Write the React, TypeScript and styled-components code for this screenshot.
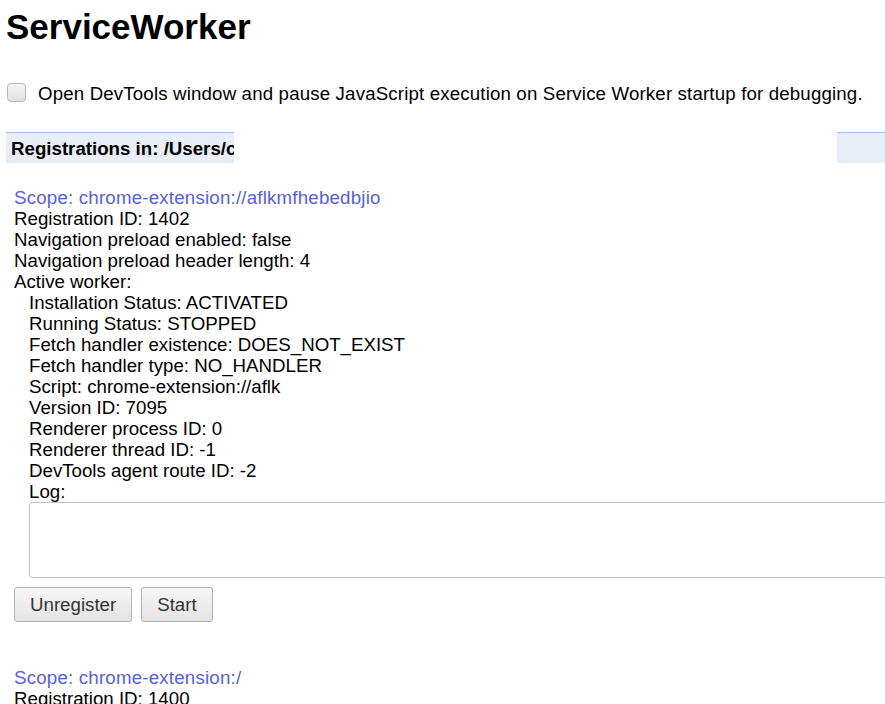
import React from "react";
import styled, { createGlobalStyle } from "styled-components";

const Global = createGlobalStyle`
  html, body { margin: 0; padding: 0; background: #fff; overflow: hidden; }
  body { font-family: "Liberation Sans", Arial, sans-serif; color: #000; }
`;

const Page = styled.div`
  padding: 7px 0 0 6px;
  width: 879px;
  font-size: 18.7px;
  line-height: 21px;
`;

const Title = styled.h1`
  margin: 0;
  font-size: 35px;
  line-height: 40px;
  font-weight: 700;
`;

const CheckRow = styled.label`
  display: flex;
  align-items: flex-start;
  gap: 12px;
  margin: 36px 0 0 1px;
`;

const Check = styled.input`
  appearance: none;
  margin: 0;
  width: 19px;
  height: 19px;
  box-sizing: border-box;
  border: 1px solid #b9b9b9;
  border-radius: 4px;
  background: linear-gradient(#f4f4f4, #e2e2e2);
  flex: none;
`;

const CheckText = styled.span`
  letter-spacing: 0.15px;
`;

const HeaderRow = styled.div`
  display: flex;
  justify-content: space-between;
  margin-top: 28px;
`;

const HeaderCell = styled.div<{ $w: number }>`
  width: ${(p) => p.$w}px;
  box-sizing: border-box;
  height: 31px;
  border-top: 1px solid #9ec3ef;
  background: #e9edf8;
  padding: 5px 0 0 5px;
  font-weight: 700;
  white-space: nowrap;
  overflow: hidden;
`;

const Registration = styled.section<{ $top: number }>`
  margin: ${(p) => p.$top}px 0 0 8px;
`;

const ScopeLine = styled.div`
  color: #5561de;
  white-space: nowrap;
  letter-spacing: 0.2px;
`;

const Line = styled.div<{ $indent?: boolean }>`
  padding-left: ${(p) => (p.$indent ? 15 : 0)}px;
  white-space: nowrap;
`;

const LogBox = styled.textarea`
  display: block;
  margin: 0 0 0 15px;
  width: 880px;
  height: 76px;
  box-sizing: border-box;
  border: 1px solid #c2c2c2;
  border-radius: 3px;
  resize: none;
  background: #fff;
`;

const Buttons = styled.div`
  display: flex;
  gap: 9px;
  margin-top: 9px;
`;

const Button = styled.button`
  height: 35px;
  box-sizing: border-box;
  padding: 0 15px;
  border: 1px solid #b3b3b3;
  border-radius: 3px;
  background: linear-gradient(#f7f7f7, #e3e3e3);
  font-family: "Liberation Sans", Arial, sans-serif;
  font-size: 18.7px;
  color: #333;
`;

const workerLines = [
  "Installation Status: ACTIVATED",
  "Running Status: STOPPED",
  "Fetch handler existence: DOES_NOT_EXIST",
  "Fetch handler type: NO_HANDLER",
  "Script: chrome-extension://aflk",
  "Version ID: 7095",
  "Renderer process ID: 0",
  "Renderer thread ID: -1",
  "DevTools agent route ID: -2",
  "Log:",
];

export default function App() {
  return (
    <>
      <Global />
      <Page>
        <Title>ServiceWorker</Title>
        <CheckRow>
          <Check type="checkbox" />
          <CheckText>
            Open DevTools window and pause JavaScript execution on Service Worker startup for debugging.
          </CheckText>
        </CheckRow>
        <HeaderRow>
          <HeaderCell $w={228}>Registrations in: /Users/c</HeaderCell>
          <HeaderCell $w={48} />
        </HeaderRow>
        <Registration $top={24}>
          <ScopeLine>Scope: chrome-extension://aflkmfhebedbjio</ScopeLine>
          <Line>Registration ID: 1402</Line>
          <Line>Navigation preload enabled: false</Line>
          <Line>Navigation preload header length: 4</Line>
          <Line>Active worker:</Line>
          {workerLines.map((l) => (
            <Line $indent key={l}>
              {l}
            </Line>
          ))}
          <LogBox readOnly />
          <Buttons>
            <Button>Unregister</Button>
            <Button>Start</Button>
          </Buttons>
        </Registration>
        <Registration $top={45}>
          <ScopeLine>Scope: chrome-extension:/</ScopeLine>
          <Line>Registration ID: 1400</Line>
        </Registration>
      </Page>
    </>
  );
}
